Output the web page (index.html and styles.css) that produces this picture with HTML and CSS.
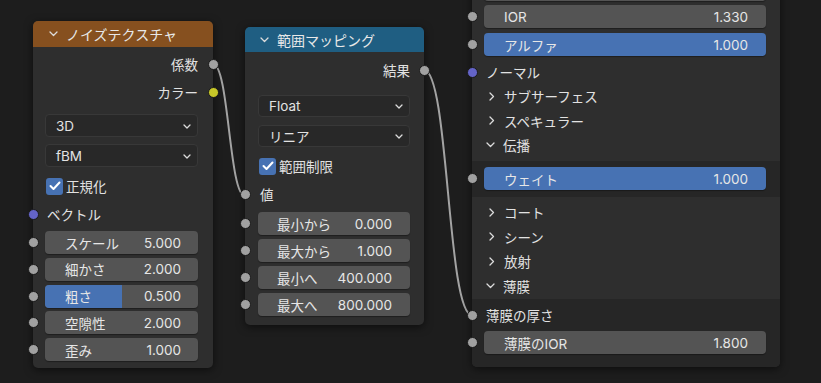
FILE: index.html
```html
<!DOCTYPE html>
<html lang="ja">
<head>
    <meta charset="UTF-8">
    <meta name="viewport" content="width=device-width, initial-scale=1.0">
    <title>ノードエディター</title>
    <link rel="stylesheet" href="styles.css">
</head>
<body>
    <div class="canvas">
        <svg class="links" width="821" height="383" viewBox="0 0 821 383">
            <path d="M213,64 C229,64 229,196 245,196" />
            <path d="M424,70 C449,70 447,315 472,315" />
        </svg>

        <!-- ノイズテクスチャ -->
        <div class="node noise">
            <div class="node-head orange">
                <svg class="chev" width="9" height="6" viewBox="0 0 9 6"><path d="M1,1 L4.5,4.5 L8,1" /></svg>
                ノイズテクスチャ
            </div>
            <div class="node-body">
                <div class="row out first"><span>係数</span><i class="sock right gray"></i></div>
                <div class="row out"><span>カラー</span><i class="sock right yellow"></i></div>
                <div class="select gap8"><span>3D</span><svg class="dd" width="8" height="5" viewBox="0 0 8 5"><path d="M1,1 L4,4 L7,1" /></svg></div>
                <div class="select gap7"><span>fBM</span><svg class="dd" width="8" height="5" viewBox="0 0 8 5"><path d="M1,1 L4,4 L7,1" /></svg></div>
                <div class="row check gap8"><span class="box"><svg width="12" height="10" viewBox="0 0 12 10"><path d="M1.5,5 L4.5,8 L10.5,1.5" /></svg></span>正規化</div>
                <div class="row in gap6"><i class="sock left purple"></i><span>ベクトル</span></div>
                <div class="row field gap6"><i class="sock left gray"></i><div class="slider"><span>スケール</span><span>5.000</span></div></div>
                <div class="row field"><i class="sock left gray"></i><div class="slider"><span>細かさ</span><span>2.000</span></div></div>
                <div class="row field"><i class="sock left gray"></i><div class="slider"><span class="fill" style="width:50%"></span><span>粗さ</span><span>0.500</span></div></div>
                <div class="row field"><i class="sock left gray"></i><div class="slider"><span>空隙性</span><span>2.000</span></div></div>
                <div class="row field"><i class="sock left gray"></i><div class="slider"><span>歪み</span><span>1.000</span></div></div>
            </div>
        </div>

        <!-- 範囲マッピング -->
        <div class="node maprange">
            <div class="node-head blue">
                <svg class="chev" width="9" height="6" viewBox="0 0 9 6"><path d="M1,1 L4.5,4.5 L8,1" /></svg>
                範囲マッピング
            </div>
            <div class="node-body">
                <div class="row out"><span>結果</span><i class="sock right gray"></i></div>
                <div class="select gap11"><span>Float</span><svg class="dd" width="8" height="5" viewBox="0 0 8 5"><path d="M1,1 L4,4 L7,1" /></svg></div>
                <div class="select gap8"><span>リニア</span><svg class="dd" width="8" height="5" viewBox="0 0 8 5"><path d="M1,1 L4,4 L7,1" /></svg></div>
                <div class="row check gap8"><span class="box"><svg width="12" height="10" viewBox="0 0 12 10"><path d="M1.5,5 L4.5,8 L10.5,1.5" /></svg></span>範囲制限</div>
                <div class="row in gap6"><i class="sock left gray"></i><span>値</span></div>
                <div class="row field gap7"><i class="sock left gray"></i><div class="slider"><span>最小から</span><span>0.000</span></div></div>
                <div class="row field"><i class="sock left gray"></i><div class="slider"><span>最大から</span><span>1.000</span></div></div>
                <div class="row field"><i class="sock left gray"></i><div class="slider"><span>最小へ</span><span>400.000</span></div></div>
                <div class="row field"><i class="sock left gray"></i><div class="slider"><span>最大へ</span><span>800.000</span></div></div>
            </div>
        </div>

        <!-- プリンシプルBSDF（下部） -->
        <div class="node bsdf">
            <div class="sect top">
                <div class="row field wide"><div class="slider"><span></span><span></span></div></div>
                <div class="row field wide g4"><i class="sock left gray"></i><div class="slider"><span>IOR</span><span>1.330</span></div></div>
                <div class="row field wide g5"><i class="sock left gray"></i><div class="slider sel"><span>アルファ</span><span>1.000</span></div></div>
                <div class="row in normal"><i class="sock left purple"></i><span>ノーマル</span></div>
                <div class="row panel"><svg class="pchev" width="6" height="9" viewBox="0 0 6 9"><path d="M1,1 L4.5,4.5 L1,8" /></svg>サブサーフェス</div>
                <div class="row panel"><svg class="pchev" width="6" height="9" viewBox="0 0 6 9"><path d="M1,1 L4.5,4.5 L1,8" /></svg>スペキュラー</div>
                <div class="row panel open"><svg class="pchev" width="9" height="6" viewBox="0 0 9 6"><path d="M1,1 L4.5,4.5 L8,1" /></svg>伝播</div>
            </div>
            <div class="sect dark weight">
                <div class="row field wide"><i class="sock left gray"></i><div class="slider sel"><span>ウェイト</span><span>1.000</span></div></div>
            </div>
            <div class="sect panels">
                <div class="row panel"><svg class="pchev" width="6" height="9" viewBox="0 0 6 9"><path d="M1,1 L4.5,4.5 L1,8" /></svg>コート</div>
                <div class="row panel"><svg class="pchev" width="6" height="9" viewBox="0 0 6 9"><path d="M1,1 L4.5,4.5 L1,8" /></svg>シーン</div>
                <div class="row panel"><svg class="pchev" width="6" height="9" viewBox="0 0 6 9"><path d="M1,1 L4.5,4.5 L1,8" /></svg>放射</div>
                <div class="row panel open"><svg class="pchev" width="9" height="6" viewBox="0 0 9 6"><path d="M1,1 L4.5,4.5 L8,1" /></svg>薄膜</div>
            </div>
            <div class="sect dark film">
                <div class="row in"><i class="sock left gray"></i><span>薄膜の厚さ</span></div>
                <div class="row field wide g5"><i class="sock left gray"></i><div class="slider"><span>薄膜のIOR</span><span>1.800</span></div></div>
            </div>
        </div>
    </div>
</body>
</html>
```

FILE: styles.css
```css
* { box-sizing: border-box; }
html, body { margin: 0; padding: 0; }
body {
    background: #1d1d1d;
    font-family: "Inter", "Noto Sans CJK JP", sans-serif;
    font-size: 13.5px;
    color: #e2e2e2;
    overflow: hidden;
}
.canvas {
    position: relative;
    width: 821px;
    height: 383px;
    overflow: hidden;
    background: #1d1d1d;
}
.links {
    position: absolute;
    left: 0;
    top: 0;
    z-index: 0;
}
.links path {
    fill: none;
    stroke: #a3a3a3;
    stroke-width: 2;
}

/* nodes sit on a free canvas */
.node {
    position: absolute;
    z-index: 1;
    background: #2e2e2e;
    border-radius: 5px;
    box-shadow: 0 2px 8px rgba(0, 0, 0, 0.55);
}
.noise { left: 33px; top: 21px; width: 180px; height: 347px; }
.maprange { left: 245px; top: 27px; width: 179px; height: 298px; }
.bsdf { left: 472px; top: -30px; width: 308px; height: 397px; border-radius: 0 0 5px 5px; }

.node-head {
    display: flex;
    align-items: center;
    border-radius: 5px 5px 0 0;
    color: #e8e8e8;
    font-size: 14px;
}
.noise .node-head { height: 26px; padding-left: 16px; }
.maprange .node-head { height: 25px; padding-left: 15px; }
.orange { background: #86501f; }
.blue { background: #1f5e82; }
.chev { margin-right: 8px; }
.chev path, .dd path, .pchev path {
    fill: none;
    stroke: #dcdcdc;
    stroke-width: 1.3;
    stroke-linecap: round;
    stroke-linejoin: round;
}

.node-body {
    display: flex;
    flex-direction: column;
    padding: 0 15px 0 12px;
}
.noise .node-body { padding-top: 3px; }
.maprange .node-body { padding-top: 4px; padding-right: 14px; padding-left: 13px; }

.row {
    position: relative;
    display: flex;
    align-items: center;
}
.row.out { height: 28px; justify-content: flex-end; }
.row.in { height: 22px; padding-left: 2px; }
.row.check { height: 22px; padding-left: 1px; }
.row.field { height: 23px; margin-top: 3.75px; }
.maprange .row.field { margin-top: 4px; }

.gap6 { margin-top: 6px; }
.gap7 { margin-top: 7px; }
.gap8 { margin-top: 8px; }
.gap11 { margin-top: 11px; }
.row.field.gap6 { margin-top: 6px; }
.maprange .row.field.gap7 { margin-top: 7px; }

.sock {
    position: absolute;
    top: 50%;
    width: 11px;
    height: 11px;
    margin-top: -5.5px;
    border-radius: 50%;
    border: 1px solid #1a1a1a;
}
.sock.right { right: -20.5px; }
.maprange .sock.right { right: -19.5px; }
.sock.left { left: -17.5px; }
.maprange .sock.left { left: -18.5px; }
.gray { background: #a1a1a1; }
.yellow { background: #c8c829; }
.purple { background: #6464c8; }

.select {
    display: flex;
    align-items: center;
    justify-content: space-between;
    height: 23px;
    padding: 0 6px 0 10px;
    background: #282828;
    border: 1px solid #383838;
    border-radius: 4px;
    color: #e2e2e2;
}
.maprange .select { height: 22px; }
.dd { margin-top: 1px; }

.box {
    display: flex;
    align-items: center;
    justify-content: center;
    width: 17px;
    height: 17px;
    margin-right: 3px;
    background: #4772b3;
    border-radius: 3px;
}
.box path {
    fill: none;
    stroke: #ffffff;
    stroke-width: 2;
    stroke-linecap: round;
    stroke-linejoin: round;
}

.slider {
    position: relative;
    flex: 1;
    display: flex;
    align-items: center;
    justify-content: space-between;
    height: 100%;
    padding: 0 17px 0 20px;
    background: #545454;
    border-radius: 4px;
    overflow: hidden;
    color: #e6e6e6;
    box-shadow: 0 1px 1px rgba(0, 0, 0, 0.35);
}
.maprange .slider { padding-left: 19px; padding-right: 18px; }
.slider span { position: relative; }
.slider .fill {
    position: absolute;
    left: 0;
    top: 0;
    bottom: 0;
    background: #4772b3;
}
.slider.sel { background: #4772b3; }

/* principled bsdf sections */
.sect {
    display: flex;
    flex-direction: column;
}
.sect.dark { background: #262626; }
.sect.top { padding: 8px 0 3.5px; }
.sect.weight { height: 36px; padding-top: 6px; }
.sect.panels { height: 102px; padding-top: 3px; }
.sect.film { height: 68px; padding-top: 5px; border-radius: 0 0 5px 5px; }
.bsdf .row.field { margin: 0 14px 0 12px; }
.bsdf .row.field.g4 { margin-top: 4px; }
.bsdf .row.field.g5 { margin-top: 5px; }
.bsdf .slider { padding-right: 18px; }
.bsdf .row.in { padding-left: 14px; }
.bsdf .row.in .sock.left { left: -5.5px; }
.bsdf .row.field .sock.left { left: -17.5px; }
.row.normal { height: 24px; margin-top: 4px; }
.row.panel { height: 24.5px; padding-left: 17px; }
.pchev { margin-right: 9px; }
.row.panel.open { padding-left: 14px; }
.row.panel.open .pchev { margin-right: 8px; }
```
